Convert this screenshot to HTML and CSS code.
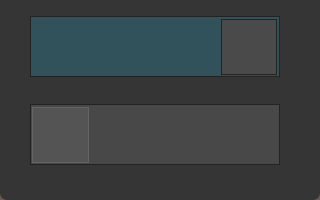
FILE: index.html
```html
<!DOCTYPE html>
<html lang="en">
<head>
    <meta charset="UTF-8">
    <title>Toggles</title>
    <link rel="stylesheet" href="styles.css">
</head>
<body>
    <div class="window">
        <div class="toggle on">
            <div class="knob"></div>
        </div>
        <div class="toggle off">
            <div class="knob"></div>
        </div>
    </div>
</body>
</html>
```

FILE: styles.css
```css
html {
    background: #6e5a4e;
}
body {
    margin: 0;
    font-family: "Liberation Sans", Arial, sans-serif;
}
.window {
    width: 320px;
    height: 200px;
    box-sizing: border-box;
    background: #353535;
    border-radius: 0 0 7px 7px;
    padding: 16px 40px 0 30px;
    display: flex;
    flex-direction: column;
    gap: 27px;
}
.toggle {
    height: 61px;
    box-sizing: border-box;
    border: 1px solid #232323;
    display: flex;
    padding: 2px 1px 1px 1px;
}
.toggle.on {
    background: #31525b;
    justify-content: flex-end;
    padding-right: 2px;
}
.toggle.off {
    background: #484848;
}
.knob {
    width: 56px;
    height: 56px;
    box-sizing: border-box;
}
.on .knob {
    background: #4a4a4a;
    border: 1px solid #232323;
}
.off .knob {
    width: 57px;
    background: #545454;
    border: 1px solid #646464;
}
```
